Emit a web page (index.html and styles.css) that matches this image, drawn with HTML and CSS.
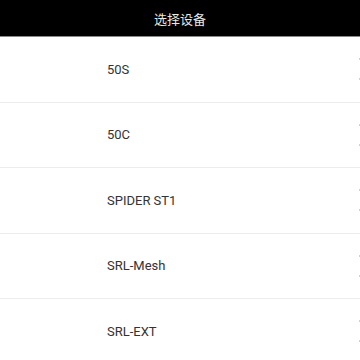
FILE: index.html
```html
<!DOCTYPE html>
<html lang="zh-CN">
<head>
    <meta charset="UTF-8">
    <meta name="viewport" content="width=device-width, initial-scale=1.0">
    <title>选择设备</title>
    <link rel="stylesheet" href="styles.css">
</head>
<body>
    <header class="titulo">选择设备</header>
    <ul class="lista">
        <li class="item"><span class="nome">50S</span><span class="seta"></span></li>
        <li class="item"><span class="nome">50C</span><span class="seta"></span></li>
        <li class="item"><span class="nome">SPIDER ST1</span><span class="seta"></span></li>
        <li class="item"><span class="nome">SRL-Mesh</span><span class="seta"></span></li>
        <li class="item"><span class="nome">SRL-EXT</span><span class="seta"></span></li>
    </ul>
</body>
</html>
```

FILE: styles.css
```css
body {
    margin: 0px;
    font-family: Roboto, "Noto Sans CJK SC", sans-serif;
    background-color: white;
    overflow: hidden;
}
.titulo {
    display: flex;
    align-items: center;
    justify-content: center;
    height: 36px;
    background-color: black;
    color: #e8e8e8;
    font-size: 13px;
    border-bottom: 1px solid #8a8a8a;
}
.lista {
    list-style: none;
    margin: 0px;
    padding: 0px;
}
.item {
    display: flex;
    align-items: center;
    justify-content: space-between;
    height: 64.5px;
    border-bottom: 1px solid #ececec;
    padding-left: 107px;
}
.nome {
    font-size: 13px;
    color: #333333;
}
.seta {
    width: 1px;
    height: 22px;
    background: linear-gradient(#d0d0d0 0px, #d0d0d0 2px, transparent 2px, transparent 20px, #d0d0d0 20px);
}
```
